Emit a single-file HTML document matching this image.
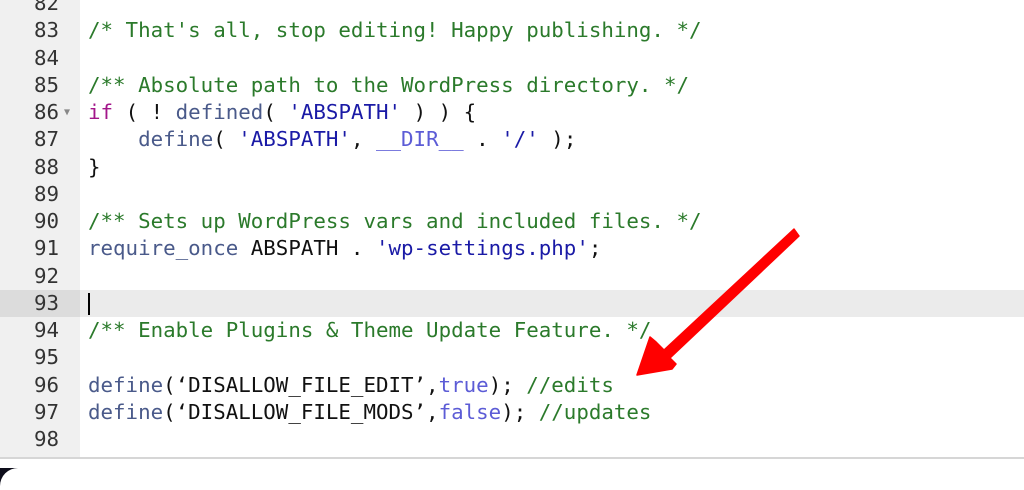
<!DOCTYPE html>
<html style="overflow:hidden"><head><style>
html,body{margin:0;width:1024px;height:490px;overflow:hidden;}
body{background:#fff;position:relative;font-family:"DejaVu Sans Mono","Liberation Mono",monospace;}
.ed{position:absolute;left:0;top:0;width:1024px;height:457px;border-bottom:2px solid #d6d6d6;overflow:hidden;}
.gut{position:absolute;left:0;top:0;width:80px;height:457px;background:#f0f0f0;}
.lines{position:absolute;left:0;top:-10px;width:1024px;}
.l{height:27.25px;line-height:27.25px;font-size:20.8px;white-space:pre;position:relative;color:#111;}
.n{position:absolute;left:0;width:59px;text-align:right;color:#333;}
.c{position:absolute;left:88px;}
.act{background:#ebebeb;}
.act .n{background:#dcdcdc;width:80px;padding-right:21px;box-sizing:border-box;}
.cm{color:#2b7a2b}.kw{color:#a3168a}.fn{color:#4a5a8a}.st{color:#1a1aa6}.bl{color:#5c5cd6}
.fold{position:absolute;left:64px;top:0;font-size:10px;color:#888;}
</style></head><body>
<div class="ed"><div class="gut"></div>
<div class="lines">
<div class="l"><span class="n">82</span></div>
<div class="l"><span class="n">83</span><span class="c cm">/* That's all, stop editing! Happy publishing. */</span></div>
<div class="l"><span class="n">84</span></div>
<div class="l"><span class="n">85</span><span class="c cm">/** Absolute path to the WordPress directory. */</span></div>
<div class="l"><span class="n">86</span><span class="fold">▼</span><span class="c"><span class="kw">if</span> ( ! <span class="fn">defined</span>( <span class="st">'ABSPATH'</span> ) ) {</span></div>
<div class="l"><span class="n">87</span><span class="c">    <span class="fn">define</span>( <span class="st">'ABSPATH'</span>, <span class="bl">__DIR__</span> . <span class="st">'/'</span> );</span></div>
<div class="l"><span class="n">88</span><span class="c">}</span></div>
<div class="l"><span class="n">89</span></div>
<div class="l"><span class="n">90</span><span class="c cm">/** Sets up WordPress vars and included files. */</span></div>
<div class="l"><span class="n">91</span><span class="c"><span class="fn">require_once</span> ABSPATH . <span class="st">'wp-settings.php'</span>;</span></div>
<div class="l"><span class="n">92</span></div>
<div class="l act"><span class="n">93</span><span class="c" style="border-left:2px solid #000;height:22px;top:3px;"></span></div>
<div class="l"><span class="n">94</span><span class="c cm">/** Enable Plugins &amp; Theme Update Feature. */</span></div>
<div class="l"><span class="n">95</span></div>
<div class="l"><span class="n">96</span><span class="c"><span class="fn">define</span>(‘DISALLOW_FILE_EDIT’,<span class="bl">true</span>); <span class="cm">//edits</span></span></div>
<div class="l"><span class="n">97</span><span class="c"><span class="fn">define</span>(‘DISALLOW_FILE_MODS’,<span class="bl">false</span>); <span class="cm">//updates</span></span></div>
<div class="l"><span class="n">98</span></div>
</div></div>
<div style="position:absolute;left:0;top:468px;width:24px;height:22px;background:#0d0d1a;"></div>
<div style="position:absolute;left:0;top:468px;width:60px;height:40px;background:#fff;border-radius:18px 0 0 0;"></div>
<svg style="position:absolute;left:0;top:0" width="1024" height="490">
<polygon fill="#f00" stroke="#f00" stroke-width="1.5" stroke-linejoin="round" points="794,229 799,236 670,358 676,364 672,369 637,375 650,337 656,342 664,350"/>
</svg>
</body></html>
